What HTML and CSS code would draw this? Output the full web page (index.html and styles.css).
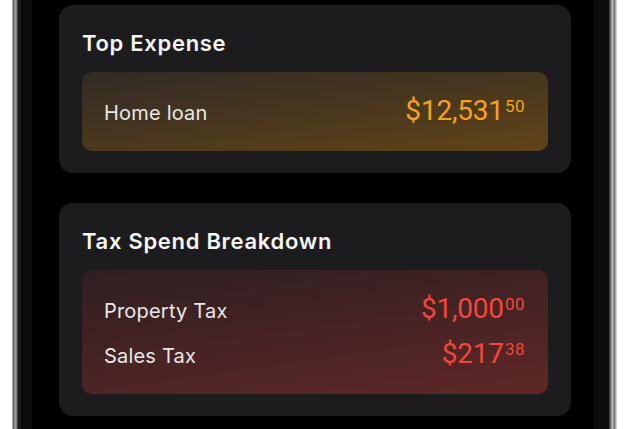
FILE: index.html
```html
<!DOCTYPE html>
<html lang="en">
  <head>
    <meta charset="UTF-8" />
    <meta name="viewport" content="width=device-width, initial-scale=1.0" />
    <title>Expenses</title>
    <link rel="stylesheet" href="styles.css">
  </head>
  <body>
    <div class="phone">
      <div class="bezel">
        <div class="screen">
          <div class="card">
            <h2 class="card-title">Top Expense</h2>
            <div class="panel panel-amber">
              <div class="row">
                <span class="label">Home loan</span>
                <span class="amount">$12,531<span class="cents">50</span></span>
              </div>
            </div>
          </div>

          <div class="card">
            <h2 class="card-title">Tax Spend Breakdown</h2>
            <div class="panel panel-red">
              <div class="row">
                <span class="label">Property Tax</span>
                <span class="amount">$1,000<span class="cents">00</span></span>
              </div>
              <div class="row">
                <span class="label">Sales Tax</span>
                <span class="amount">$217<span class="cents">38</span></span>
              </div>
            </div>
          </div>
        </div>
      </div>
    </div>
  </body>
</html>
```

FILE: styles.css
```css
* {
  padding: 0;
  margin: 0;
  box-sizing: border-box;
}

body {
  background: #fff;
  font-family: "Inter", "Liberation Sans", sans-serif;
  overflow: hidden;
}

.phone {
  width: 605px;
  height: 429px;
  margin-left: 12px;
  padding: 0 8px 0 6px;
  background:
    linear-gradient(90deg, #cfcfcf, #5e5e5e 25%, #a5a5a5 50%, #7c7c7c 75%, #2c2c2c) left / 6px 100% no-repeat,
    linear-gradient(90deg, #2c2c2c, #6c6c6c 20%, #c2c2c2 45%, #6c6c6c 65%, #b0b0b0 85%, #e8e8e8) right / 8px 100% no-repeat,
    #000;
}

.bezel {
  height: 100%;
  padding: 0 16px 0 14px;
  background: #0b0b0b;
  box-shadow: inset 3px 0 #1a1a1a;
}

.screen {
  height: 100%;
  padding: 5px 22px 0 27px;
  background: #000;
}

.card {
  background: #1c1c1e;
  border-radius: 14px;
  padding: 25px 23px 22px;
  margin-bottom: 30px;
}

.card-title {
  color: #f4f4f4;
  font-size: 22px;
  font-weight: 600;
  line-height: 26px;
  letter-spacing: 0.7px;
  margin-bottom: 16px;
}

.panel {
  border-radius: 10px;
  padding: 23px 23px 24px 22px;
}

.panel-amber {
  background: linear-gradient(172deg, #302a25, #614418);
}

.panel-red {
  background: linear-gradient(172deg, #2e1f21, #5f2727);
}

.row {
  display: flex;
  justify-content: space-between;
  align-items: baseline;
}

.row + .row {
  margin-top: 13px;
}

.label {
  color: #e8e8e8;
  font-size: 20px;
  line-height: 24px;
  letter-spacing: 0.2px;
}

.amount {
  font-family: "Roboto", "Liberation Sans", sans-serif;
  font-size: 28px;
  line-height: 32px;
  letter-spacing: -0.2px;
}

.panel-amber .amount {
  color: #f9a11b;
}

.panel-red .amount {
  color: #f4463b;
}

.cents {
  font-size: 17px;
  line-height: 16px;
  margin-left: 1px;
  letter-spacing: 0.5px;
  vertical-align: 8px;
}
```
